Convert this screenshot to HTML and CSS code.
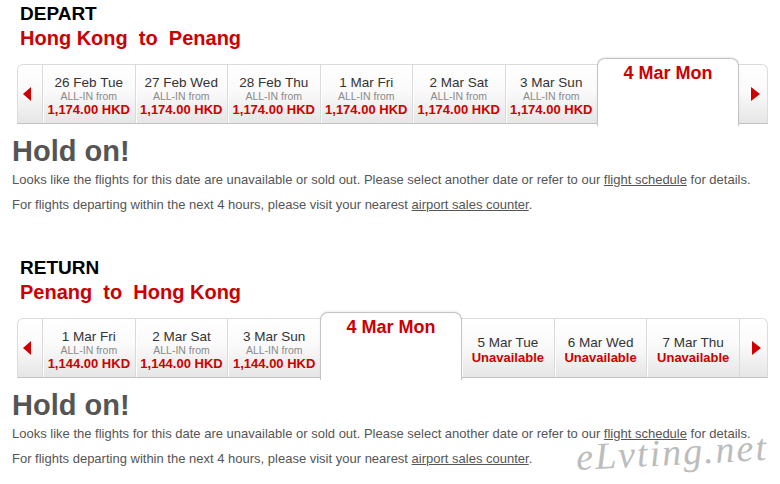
FILE: index.html
```html
<!DOCTYPE html>
<html lang="en">
<head>
  <meta charset="UTF-8" />
  <title>Select your flight</title>
  <link rel="stylesheet" href="styles.css">
</head>
<body>

  <!-- depart leg -->
  <div class="leg">
    <div class="leg-label">DEPART</div>
    <div class="leg-route">Hong Kong&nbsp; to&nbsp; Penang</div>

    <div class="date-bar">
      <div class="nav nav-prev"><span class="arrow-left"></span></div>
      <div class="day">
        <span class="day-date">26 Feb Tue</span>
        <span class="day-from">ALL-IN from</span>
        <span class="day-price">1,174.00 HKD</span>
      </div>
      <div class="day">
        <span class="day-date">27 Feb Wed</span>
        <span class="day-from">ALL-IN from</span>
        <span class="day-price">1,174.00 HKD</span>
      </div>
      <div class="day">
        <span class="day-date">28 Feb Thu</span>
        <span class="day-from">ALL-IN from</span>
        <span class="day-price">1,174.00 HKD</span>
      </div>
      <div class="day">
        <span class="day-date">1 Mar Fri</span>
        <span class="day-from">ALL-IN from</span>
        <span class="day-price">1,174.00 HKD</span>
      </div>
      <div class="day">
        <span class="day-date">2 Mar Sat</span>
        <span class="day-from">ALL-IN from</span>
        <span class="day-price">1,174.00 HKD</span>
      </div>
      <div class="day">
        <span class="day-date">3 Mar Sun</span>
        <span class="day-from">ALL-IN from</span>
        <span class="day-price">1,174.00 HKD</span>
      </div>
      <div class="day-current">4 Mar Mon</div>
      <div class="nav nav-next after-current"><span class="arrow-right"></span></div>
    </div>

    <h2 class="notice-title">Hold on!</h2>
    <p class="notice-text">Looks like the flights for this date are unavailable or sold out. Please select another date or refer to our <a href="#">flight schedule</a> for details.</p>
    <p class="notice-text notice-second">For flights departing within the next 4 hours, please visit your nearest <a href="#">airport sales counter</a>.</p>
  </div>

  <!-- return leg -->
  <div class="leg">
    <div class="leg-label">RETURN</div>
    <div class="leg-route">Penang&nbsp; to&nbsp; Hong Kong</div>

    <div class="date-bar">
      <div class="nav nav-prev"><span class="arrow-left"></span></div>
      <div class="day">
        <span class="day-date">1 Mar Fri</span>
        <span class="day-from">ALL-IN from</span>
        <span class="day-price">1,144.00 HKD</span>
      </div>
      <div class="day">
        <span class="day-date">2 Mar Sat</span>
        <span class="day-from">ALL-IN from</span>
        <span class="day-price">1,144.00 HKD</span>
      </div>
      <div class="day">
        <span class="day-date">3 Mar Sun</span>
        <span class="day-from">ALL-IN from</span>
        <span class="day-price">1,144.00 HKD</span>
      </div>
      <div class="day-current">4 Mar Mon</div>
      <div class="day day-none after-current">
        <span class="day-date">5 Mar Tue</span>
        <span class="day-price">Unavailable</span>
      </div>
      <div class="day day-none">
        <span class="day-date">6 Mar Wed</span>
        <span class="day-price">Unavailable</span>
      </div>
      <div class="day day-none">
        <span class="day-date">7 Mar Thu</span>
        <span class="day-price">Unavailable</span>
      </div>
      <div class="nav nav-next"><span class="arrow-right"></span></div>
    </div>

    <h2 class="notice-title">Hold on!</h2>
    <p class="notice-text">Looks like the flights for this date are unavailable or sold out. Please select another date or refer to our <a href="#">flight schedule</a> for details.</p>
    <p class="notice-text notice-second">For flights departing within the next 4 hours, please visit your nearest <a href="#">airport sales counter</a>.</p>
  </div>

  <div class="watermark">eLvting.net</div>

</body>
</html>
```

FILE: styles.css
```css
body {
  margin: 0;
  position: relative;
  font-family: "Liberation Sans", Arial, sans-serif;
  background: #fff;
  color: #555;
}

.leg {
  height: 254px;
}

.leg-label {
  margin-left: 20px;
  padding-top: 3px;
  font-size: 19px;
  line-height: 22px;
  font-weight: bold;
  color: #000;
}

.leg-route {
  margin: 1px 0 0 20px;
  font-size: 20px;
  line-height: 24px;
  font-weight: bold;
  color: #cc0000;
}

/* barre des dates */
.date-bar {
  display: flex;
  box-sizing: border-box;
  width: 751px;
  height: 60px;
  margin: 14px 0 0 17px;
  border: 1px solid #dcdcdc;
  border-bottom-color: #c2c2c2;
  border-radius: 6px 6px 0 0;
  background: linear-gradient(#ffffff, #fafafa 45%, #e6e6e6);
}

.nav {
  display: flex;
  align-items: center;
  flex: none;
}
.nav-prev {
  width: 24px;
  padding-left: 5px;
  box-sizing: border-box;
}
.nav-next {
  width: 28px;
  padding-left: 12px;
  box-sizing: border-box;
  border-left: 1px solid #dadada;
}

.arrow-left {
  width: 0;
  height: 0;
  border-top: 7px solid transparent;
  border-bottom: 7px solid transparent;
  border-right: 8px solid #cc0000;
}
.arrow-right {
  width: 0;
  height: 0;
  border-top: 7px solid transparent;
  border-bottom: 7px solid transparent;
  border-left: 9px solid #cc0000;
}

.day {
  flex: 1;
  display: flex;
  flex-direction: column;
  align-items: center;
  padding-top: 11px;
  border-left: 1px solid #dadada;
  box-shadow: inset 1px 0 #fff;
  white-space: nowrap;
}
.day.after-current,
.nav.after-current {
  border-left: none;
}
.day-none {
  padding-top: 17px;
}

.day-date {
  font-size: 13.5px;
  line-height: 14px;
  color: #333;
}
.day-from {
  font-size: 10.5px;
  line-height: 12px;
  color: #8a8a8a;
}
.day-price {
  font-size: 13px;
  line-height: 16px;
  font-weight: bold;
  color: #cc0000;
}

/* onglet du jour choisi */
.day-current {
  flex: none;
  align-self: flex-start;
  position: relative;
  box-sizing: border-box;
  width: 142px;
  height: 68px;
  margin-top: -7px;
  padding-top: 3px;
  background: #fff;
  border: 1px solid #c4c4c4;
  border-bottom: none;
  border-radius: 8px 8px 0 0;
  box-shadow: 0 -1px 2px rgba(0,0,0,0.08);
  text-align: center;
  font-size: 18px;
  line-height: 22px;
  font-weight: bold;
  color: #cc0000;
}

.notice-title {
  margin: 10px 0 0 12px;
  font-size: 29px;
  line-height: 34px;
  font-weight: bold;
  color: #555;
}

.notice-text {
  margin: 4px 0 0 12px;
  font-size: 13px;
  line-height: 16px;
  color: #555;
}
.notice-second {
  margin-top: 9px;
}
.notice-text a {
  color: #555;
  text-decoration: underline;
}

.watermark {
  position: absolute;
  left: 576px;
  top: 430px;
  font-family: "Liberation Serif", serif;
  font-style: italic;
  font-size: 38px;
  letter-spacing: 2px;
  color: #bcbcbc;
  transform: rotate(-3deg);
}
```
